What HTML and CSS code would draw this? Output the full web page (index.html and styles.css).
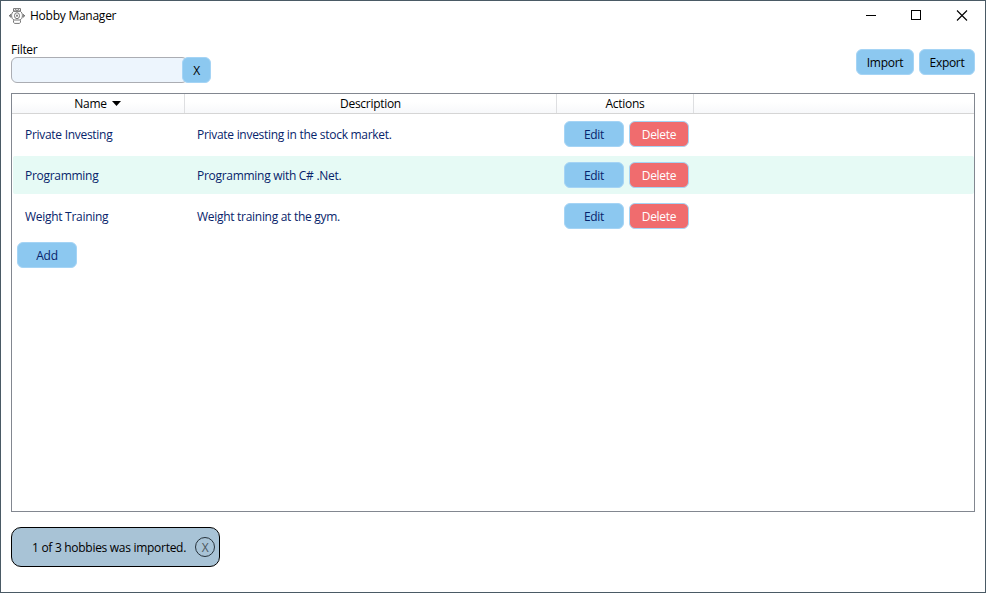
FILE: index.html
```html
<!DOCTYPE html>
<html lang="en">
<head>
<meta charset="utf-8">
<title>Hobby Manager</title>
<link rel="stylesheet" href="styles.css">
</head>
<body>
<div class="window">
  <header class="titlebar">
    <svg class="app-icon" width="16" height="16" viewBox="0 0 16 16" fill="none" stroke="#777" stroke-width="1">
      <path d="M4.500 .6h7v2.400h-7zM6 .8l2 2 2-2M4.700 3.300C3.200 4.200 2.600 5.700 2.600 7.700s.8 3.500 2.400 4.300h6c1.600-.8 2.400-2.300 2.400-4.300s-.6-3.500-2.100-4.400z"/>
      <path d="M4.500 12.300v1.900l1 1.200h5l1-1.200v-1.900M1.600 6v3.500M.5 7v1.500M14.400 6v3.500M15.500 7v1.500"/>
      <ellipse cx="8" cy="7.700" rx="2.500" ry="3"/>
      <path d="M8 6.500v2.400M7 7.700h2"/>
    </svg>
    <h1 class="title">Hobby Manager</h1>
    <svg class="controls" width="138" height="29" viewBox="0 0 138 29" fill="none" stroke="#000" shape-rendering="crispEdges">
      <path d="M19 14.500h10M64.500 9.500h9v9h-9z"/>
      <path d="M110 9.500l10 10M120 9.500l-10 10" shape-rendering="auto" stroke-width="1.100"/>
    </svg>
  </header>
  <main class="content">
    <div class="toolbar">
      <div class="filter">
        <label class="label" for="filter">Filter</label>
        <div class="filter-box">
          <input id="filter" class="filter-input" type="text">
          <button class="btn clear">X</button>
        </div>
      </div>
      <div class="actions">
        <button class="btn import">Import</button>
        <button class="btn export">Export</button>
      </div>
    </div>
    <section class="grid">
      <div class="cols head">
        <div class="name">Name<svg class="sort" width="9" height="5" viewBox="0 0 9 5"><path d="M0 0h9L4.500 5z"/></svg></div>
        <div>Description</div>
        <div>Actions</div>
        <div></div>
      </div>
      <div class="cols row">
        <div>Private Investing</div><div>Private investing in the stock market.</div>
        <div class="cell-actions"><button class="btn">Edit</button><button class="btn delete">Delete</button></div>
      </div>
      <div class="cols row alt">
        <div>Programming</div><div>Programming with C# .Net.</div>
        <div class="cell-actions"><button class="btn">Edit</button><button class="btn delete">Delete</button></div>
      </div>
      <div class="cols row">
        <div>Weight Training</div><div>Weight training at the gym.</div>
        <div class="cell-actions"><button class="btn">Edit</button><button class="btn delete">Delete</button></div>
      </div>
      <button class="btn add">Add</button>
    </section>
    <div class="toast"><span class="message">1 of 3 hobbies was imported.</span><button class="dismiss">X</button></div>
  </main>
</div>
</body>
</html>
```
FILE: styles.css
```css
* { box-sizing: border-box; }
body { margin: 0; font: 12px/16px "Open Sans", "Noto Sans", sans-serif; letter-spacing: -0.29px; color: #000; }
button, input { font: inherit; letter-spacing: inherit; color: inherit; margin: 0; }
.window { width: 986px; height: 593px; border: 1px solid #4a5a65; background: #fff; }
.titlebar { display: flex; height: 29px; padding-left: 8px; align-items: center; }
.app-icon { margin-right: 5px; }
.title { margin: 0; font-size: 12px; font-weight: 400; flex: 1; letter-spacing: -0.25px; }
.content { padding: 12px 10px 0; }
.toolbar { display: flex; justify-content: space-between; height: 51px; }
.label { display: block; height: 15px; line-height: 15px; }
.filter-box { display: flex; width: 200px; height: 26px; }
.filter-input { width: 177px; margin-right: -6px; padding: 0 6px; border: 1px solid #abadb3; border-radius: 6px; background: #edf5fd; }
.btn { width: 60px; height: 26px; padding: 2px 0 0; border: 1px solid #a5d4f5; border-radius: 6px; background: #8cc8f0; line-height: 22px; position: relative; }
.clear { width: 29px; }
.actions { display: flex; gap: 5px; padding-top: 7px; }
.import { width: 58px; }
.export { width: 56px; }
.grid { height: 419px; border: 1px solid #828790; }
.cols { display: grid; grid-template-columns: 172px 372px 137px 1fr; align-items: center; }
.head { height: 20px; padding-left: 1px; border-bottom: 1px solid #d5d5d5; background: linear-gradient(#fff 40%, #f7f8fa); text-align: center; line-height: 19px; }
.head > div { height: 19px; border-right: 1px solid #dedfe1; }
.head > div:last-child { border: 0; }
.head > .name { padding-right: 2px; }
.sort { margin: 0 0 2px 5px; }
.row { height: 38px; margin: 1px 0 3px 1px; border-radius: 2px; color: #07246b; }
.row + .row { margin-top: 0; }
.row > div { padding: 2px 0 0 12px; }
.row > .cell-actions { display: flex; gap: 5px; padding: 0 0 0 7px; }
.alt { background: #e6faf5; }
.btn.delete { background: #f06c6e; color: #fff; }
.btn.add { display: block; margin: 7px 0 0 5px; color: #07246b; }
.toast { display: flex; align-items: center; justify-content: flex-end; width: 209px; height: 40px; margin-top: 15px; padding-right: 4px; border: 1px solid #000; border-radius: 10px; background: #a8c3d6; gap: 9px; }
.message { padding-top: 2px; }
.dismiss { width: 20px; height: 20px; padding: 1px 0 0; border: 1px solid #26323b; border-radius: 50%; background: none; color: #4b555c; line-height: 17px; }
```
